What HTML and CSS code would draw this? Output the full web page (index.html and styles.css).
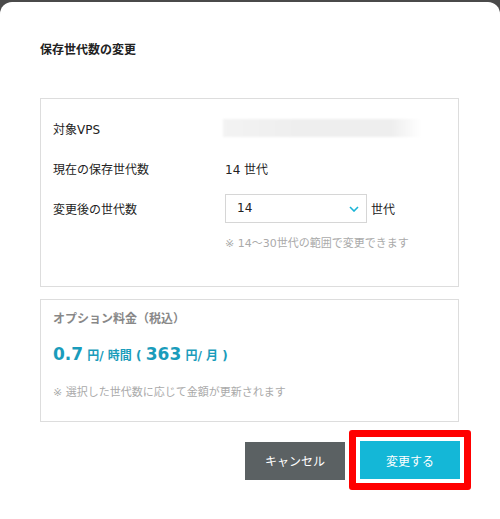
FILE: index.html
```html
<!DOCTYPE html>
<html lang="ja">
<head>
    <meta charset="UTF-8">
    <title>保存世代数の変更</title>
    <link rel="stylesheet" href="styles.css">
</head>
<body>

    <!--モーダル-->
    <div class="modal">
        <h2 class="title">保存世代数の変更</h2>

        <!--設定-->
        <div class="box setting">
            <div class="row">
                <div class="label">対象VPS</div>
                <div class="value"><span class="blur"></span></div>
            </div>
            <div class="row row-current">
                <div class="label">現在の保存世代数</div>
                <div class="value">14 世代</div>
            </div>
            <div class="row row-select">
                <div class="label">変更後の世代数</div>
                <div class="value">
                    <div class="select">
                        <span>14</span>
                        <svg width="10" height="6" viewBox="0 0 10 6"><path d="M1 1l4 4 4-4" fill="none" stroke="#1ab4d6" stroke-width="1.6"/></svg>
                    </div>
                    <span class="unit">世代</span>
                </div>
            </div>
            <p class="note note-range">※ 14〜30世代の範囲で変更できます</p>
        </div>

        <!--料金-->
        <div class="box price">
            <p class="price-title">オプション料金（税込）</p>
            <p class="price-value"><b>0.7</b> 円/ 時間 ( <b>363</b> 円/ 月 )</p>
            <p class="note">※ 選択した世代数に応じて金額が更新されます</p>
        </div>

        <div class="actions">
            <button class="btn btn-cancel">キャンセル</button>
            <div class="mark">
                <button class="btn btn-submit">変更する</button>
            </div>
        </div>
    </div>

</body>
</html>
```

FILE: styles.css
```css
/*reset*/
body, p, h2, button {
    margin: 0;
    padding: 0;
}
body {
    height: 519px;
    overflow: hidden;
    background-color: #4a4a4a;
    font-family: "DejaVu Sans", "Noto Sans CJK JP", sans-serif;
    color: #222;
}

/*モーダル*/
.modal {
    height: 530px;
    margin-top: 2px;
    padding: 0 41px 0 40px;
    border-radius: 12px;
    background-color: #fff;
}
.modal .title {
    padding-top: 40px;
    height: 56px;
    font-size: 12px;
    font-weight: bold;
    line-height: 16px;
}
.box {
    border: 1px solid #ddd;
    padding: 0 12px;
    box-sizing: border-box;
}

/*設定*/
.setting {
    height: 189px;
    padding-top: 19px;
}
.setting .row {
    display: flex;
    align-items: center;
    height: 20px;
    margin-bottom: 20px;
    font-size: 12px;
}
.setting .row-current {
    margin-bottom: 16px;
}
.setting .row-select {
    height: 29px;
    margin-bottom: 14px;
}
.setting .label {
    width: 172px;
}
.setting .value {
    display: flex;
    align-items: center;
}
.setting .blur {
    display: block;
    width: 198px;
    height: 18px;
    margin-left: -2px;
    background: linear-gradient(to right, #f3f3f3, #eeeeee 40%, #eeeeee 85%, #fff);
    filter: blur(1px);
}
.setting .select {
    display: flex;
    justify-content: space-between;
    align-items: center;
    width: 142px;
    height: 29px;
    padding: 0 7px 0 11px;
    box-sizing: border-box;
    border: 1px solid #d6d6d6;
}
.setting .select span {
    font-size: 12px;
    margin-top: -2px;
}
.setting .unit {
    margin-left: 4px;
}
.note {
    font-size: 11px;
    color: #aaa;
    line-height: 14px;
}
.note-range {
    margin-left: 172px;
}

/*料金*/
.price {
    margin-top: 12px;
    height: 123px;
    padding-top: 11px;
}
.price .price-title {
    font-size: 12px;
    font-weight: bold;
    color: #888;
    line-height: 16px;
}
.price .price-value {
    margin-top: 16px;
    height: 22px;
    font-size: 12px;
    font-weight: bold;
    color: #1a9cbb;
    line-height: 22px;
}
.price .price-value b {
    font-size: 17px;
}
.price .note {
    margin-top: 21px;
}

/*ボタン*/
.actions {
    display: flex;
    justify-content: flex-end;
    align-items: center;
    margin-top: 8px;
    margin-right: -12px;
}
.btn {
    width: 100px;
    height: 38px;
    border: none;
    color: #fff;
    font-family: "DejaVu Sans", "Noto Sans CJK JP", sans-serif;
    font-size: 12px;
    cursor: pointer;
}
.btn-cancel {
    margin-top: 1px;
    background-color: #5b6163;
}
.btn-submit {
    display: block;
    background-color: #14b7d7;
}
.mark {
    margin-left: 4px;
    padding: 4px;
    border: 7px solid #f00;
    border-radius: 3px;
}
```
